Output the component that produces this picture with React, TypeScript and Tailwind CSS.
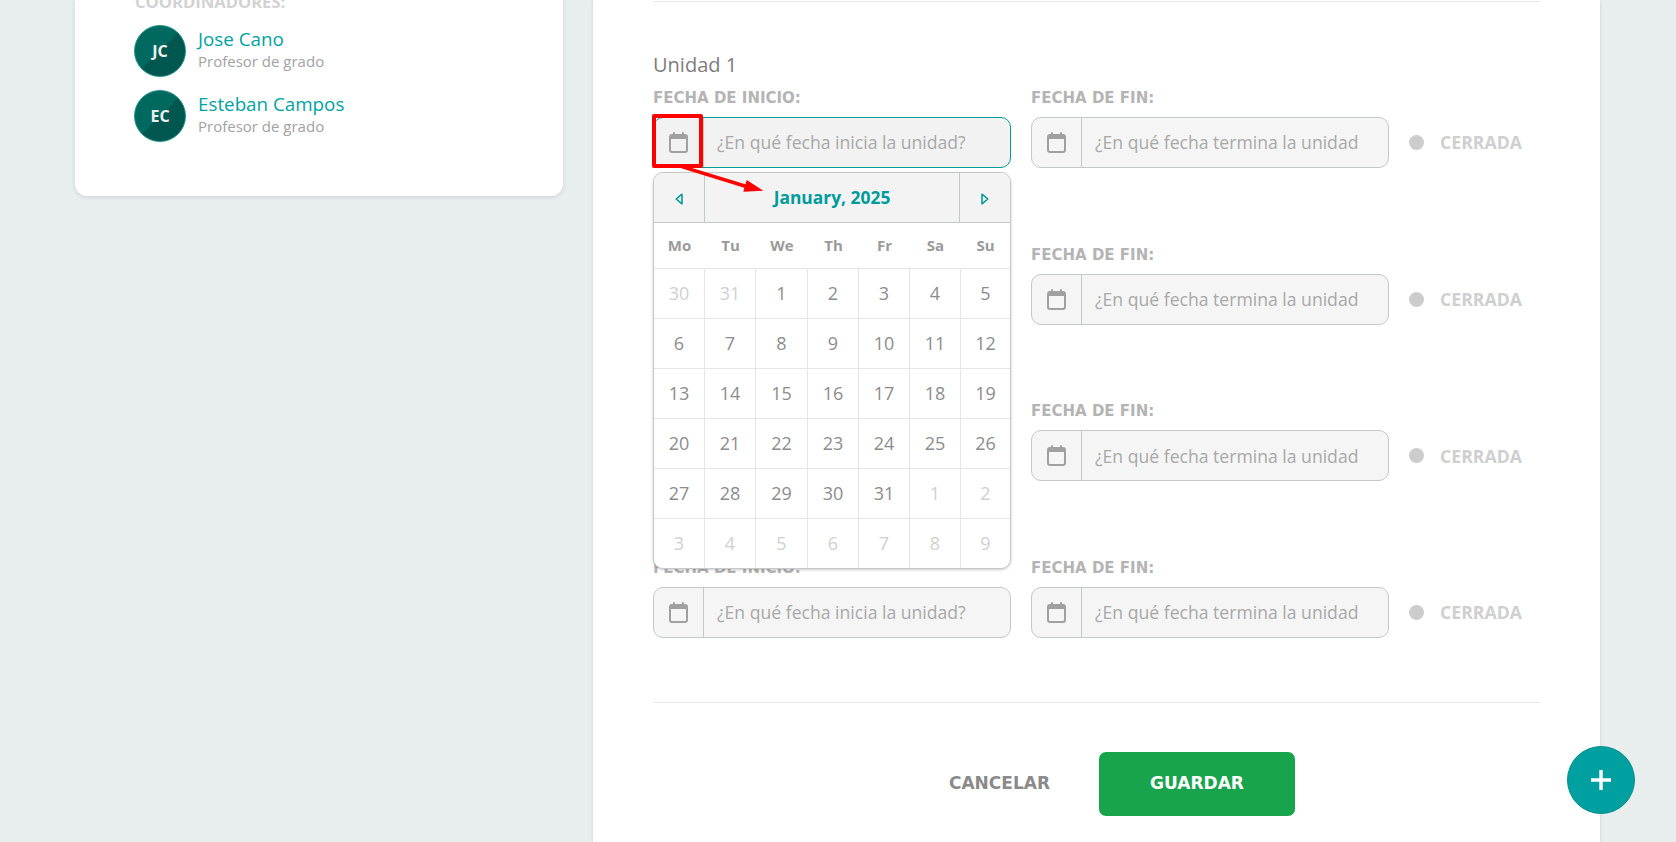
import React from "react";

const sans = "font-['Open_Sans',sans-serif]";
const heading = "font-['DejaVu_Sans',sans-serif]";

function CalIcon() {
  return (
    <svg width="19" height="21" viewBox="0 0 19 21" fill="none">
      <rect x="1" y="3" width="17" height="17" rx="2" stroke="#a0a0a0" strokeWidth="2" />
      <rect x="1" y="3" width="17" height="4" fill="#a0a0a0" />
      <rect x="4" y="0" width="2" height="4" rx="1" fill="#a0a0a0" />
      <rect x="13" y="0" width="2" height="4" rx="1" fill="#a0a0a0" />
    </svg>
  );
}

function DateInput({ placeholder, active }: { placeholder: string; active?: boolean }) {
  return (
    <div className={`flex h-[51px] w-[358px] rounded-[10px] border ${active ? "border-[#009b9b] bg-[#f2f2f2]" : "border-[#c4c8c8] bg-[#f5f5f5]"}`}>
      <div className="flex w-[50px] shrink-0 items-center justify-center border-r border-[#c4c8c8]">
        <CalIcon />
      </div>
      <div className="flex flex-1 items-center whitespace-nowrap pl-[13px] text-[17.6px] text-[#a8a8a8]">{placeholder}</div>
    </div>
  );
}

function Row({ n, active }: { n: number; active?: boolean }) {
  return (
    <div className="h-[156.67px]">
      <div className="h-[38px] pt-[1px] text-[20px] leading-[27px] text-[#7d7d7d]">Unidad {n}</div>
      <div className="flex gap-[20px]">
        <div className="w-[358px]">
          <div className={`${heading} h-[19px] pt-[1px] text-[15px] font-bold leading-[19px] text-[#b4b4b4]`}>FECHA DE INICIO:</div>
          <div className="mt-[10px]">
            <DateInput placeholder="¿En qué fecha inicia la unidad?" active={active} />
          </div>
        </div>
        <div className="w-[358px]">
          <div className={`${heading} h-[19px] pt-[1px] text-[15px] font-bold leading-[19px] text-[#b4b4b4]`}>FECHA DE FIN:</div>
          <div className="mt-[10px]">
            <DateInput placeholder="¿En qué fecha termina la unidad" />
          </div>
        </div>
        <div className="mt-[29px] flex h-[51px] items-center">
          <span className="h-[15px] w-[15px] rounded-full bg-[#cccccc]" />
          <span className="ml-[16px] text-[17.7px] font-bold text-[#cfcfcf]">CERRADA</span>
        </div>
      </div>
    </div>
  );
}

function Person({ initials, name }: { initials: string; name: string }) {
  return (
    <div className="flex h-[52px] items-start">
      <div className="flex h-[52px] w-[52px] shrink-0 items-center justify-center rounded-full border border-[#1b8f85] bg-[linear-gradient(135deg,#00695f_50%,#00574f_50%)] text-[16px] font-bold text-[#f0f0f0]">
        {initials}
      </div>
      <div className="ml-[12px] pt-[2px]">
        <div className="text-[18.8px] leading-[25px] text-[#00a3a3]">{name}</div>
        <div className="text-[15px] leading-[18px] text-[#a2a2a2]">Profesor de grado</div>
      </div>
    </div>
  );
}

const days: [string, boolean][] = [
  ...[30, 31].map((d) => [String(d), true] as [string, boolean]),
  ...Array.from({ length: 31 }, (_, i) => [String(i + 1), false] as [string, boolean]),
  ...[1, 2, 3, 4, 5, 6, 7, 8, 9].map((d) => [String(d), true] as [string, boolean]),
];

function Calendar() {
  return (
    <div className="absolute left-0 top-[172px] z-10 w-[358px] overflow-hidden rounded-[10px] border border-[#c4c8c8] bg-white shadow-[0_1px_3px_rgba(0,0,0,0.2)]">
      <div className="flex h-[50px] border-b border-[#c4c8c8] bg-[#f3f3f3]">
        <div className="flex w-[51px] items-center justify-center border-r border-[#c4c8c8] pt-[2px]">
          <svg width="8" height="12" viewBox="0 0 8 12" fill="none">
            <path d="M7 1.2 L1.2 6 L7 10.8 Z" stroke="#009b9b" strokeWidth="1.6" strokeLinejoin="round" />
          </svg>
        </div>
        <div className="flex flex-1 items-center justify-center text-[17.4px] font-bold text-[#009b9b]">January, 2025</div>
        <div className="flex w-[51px] items-center justify-center border-l border-[#c4c8c8] pt-[2px]">
          <svg width="8" height="12" viewBox="0 0 8 12" fill="none">
            <path d="M1 1.2 L6.8 6 L1 10.8 Z" stroke="#009b9b" strokeWidth="1.6" strokeLinejoin="round" />
          </svg>
        </div>
      </div>
      <div className="grid h-[45px] grid-cols-[51px_51px_52px_51px_51px_51px_49px] items-center text-center text-[15px] font-bold text-[#9a9a9a]">
        {["Mo", "Tu", "We", "Th", "Fr", "Sa", "Su"].map((d) => (
          <div key={d}>{d}</div>
        ))}
      </div>
      <div className="grid grid-cols-[51px_51px_52px_51px_51px_51px_49px]">
        {days.map(([d, muted], i) => (
          <div
            key={i}
            className={`flex h-[50px] items-center justify-center border-t border-[#e4e6e6] text-[18px] ${i % 7 !== 6 ? "border-r" : ""} ${muted ? "text-[#d0d0d0]" : "text-[#8c8c8c]"}`}
          >
            {d}
          </div>
        ))}
      </div>
    </div>
  );
}

export default function App() {
  return (
    <div className={`${sans} relative flex h-[842px] w-[1676px] overflow-hidden bg-[#e8eeee]`}>
      <div className="ml-[75px] h-[196px] w-[488px] rounded-b-[12px] bg-white pl-[59px] shadow-[0_1px_4px_rgba(0,0,0,0.12)]">
        <div className="-mt-[9px] ml-[1px] h-[34px] text-[16.6px] font-bold leading-[22px] text-[#d2d2d2]">COORDINADORES:</div>
        <div className="flex flex-col gap-[13px]">
          <Person initials="JC" name="Jose Cano" />
          <Person initials="EC" name="Esteban Campos" />
        </div>
      </div>

      <div className="ml-[30px] h-[842px] w-[1007px] bg-white px-[60px] shadow-[0_0_3px_rgba(0,0,0,0.15)]">
        <div className="relative w-[887px] pt-px">
          <div className="h-px bg-[#e8eaea]" />
          <div className="pt-[48px]">
            <Row n={1} active />
            <Row n={2} />
            <Row n={3} />
            <Row n={4} />
          </div>
          <Calendar />
          <div className="mt-[25px] h-px bg-[#e8eaea]" />
          <div className="mt-[49px] flex items-center justify-end pr-[245px]">
            <button className={`${heading} mr-[49px] pt-[1px] text-[17px] font-bold text-[#8a8a8a]`}>CANCELAR</button>
            <button className={`${heading} h-[64px] w-[196px] rounded-[7px] bg-[#18a34d] pt-[1px] text-[17px] font-bold text-white`}>GUARDAR</button>
          </div>
        </div>
      </div>

      <div className="absolute left-[1567px] top-[746px] z-20 flex h-[68px] w-[68px] items-center justify-center rounded-full border border-[#0a8d8d] bg-[#00a0a0]">
        <svg width="20" height="20" viewBox="0 0 20 20">
          <path d="M10 0 V20 M0 10 H20" stroke="#fff" strokeWidth="3.4" />
        </svg>
      </div>

      <div className="absolute left-[652px] top-[114px] z-20 h-[54px] w-[51px] rounded-[2px] border-4 border-[#ff0000]" />
      <svg className="absolute left-[670px] top-[160px] z-20" width="100" height="40" viewBox="0 0 100 40">
        <path d="M11.7 6.7 L78 27" stroke="#ff0000" strokeWidth="3.5" />
        <polygon points="93.3,30.7 76.7,20 73.3,31.7" fill="#ff0000" />
      </svg>
    </div>
  );
}
